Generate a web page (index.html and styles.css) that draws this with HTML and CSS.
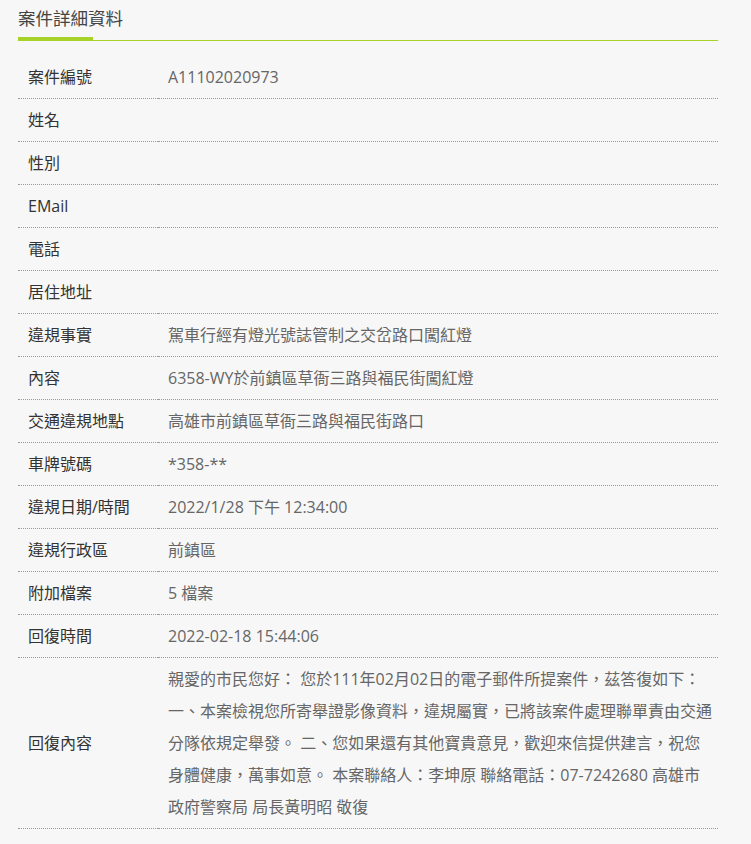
FILE: index.html
```html
<!DOCTYPE html>
<html lang="zh-Hant">
<head>
<meta charset="utf-8">
<title>案件詳細資料</title>
<link rel="stylesheet" href="styles.css">
</head>
<body>
<div class="page">
  <h2 class="title">案件詳細資料</h2>
  <table class="detail">
    <tr><th>案件編號</th><td>A11102020973</td></tr>
    <tr><th>姓名</th><td></td></tr>
    <tr><th>性別</th><td></td></tr>
    <tr><th>EMail</th><td></td></tr>
    <tr><th>電話</th><td></td></tr>
    <tr><th>居住地址</th><td></td></tr>
    <tr><th>違規事實</th><td>駕車行經有燈光號誌管制之交岔路口闖紅燈</td></tr>
    <tr><th>內容</th><td>6358-WY於前鎮區草衙三路與福民街闖紅燈</td></tr>
    <tr><th>交通違規地點</th><td>高雄市前鎮區草衙三路與福民街路口</td></tr>
    <tr><th>車牌號碼</th><td>*358-**</td></tr>
    <tr><th>違規日期/時間</th><td>2022/1/28 下午 12:34:00</td></tr>
    <tr><th>違規行政區</th><td>前鎮區</td></tr>
    <tr><th>附加檔案</th><td>5 檔案</td></tr>
    <tr><th>回復時間</th><td>2022-02-18 15:44:06</td></tr>
    <tr><th>回復內容</th><td>親愛的市民您好： 您於111年02月02日的電子郵件所提案件，茲答復如下： 一、本案檢視您所寄舉證影像資料，違規屬實，已將該案件處理聯單責由交通分隊依規定舉發。 二、您如果還有其他寶貴意見，歡迎來信提供建言，祝您身體健康，萬事如意。 本案聯絡人：李坤原 聯絡電話：07-7242680 高雄市政府警察局 局長黃明昭 敬復</td></tr>
  </table>
</div>
</body>
</html>
```
FILE: styles.css
```css
html, body {
  margin: 0;
  padding: 0;
  background: #f7f7f7;
}
body {
  font-family: "Open Sans", "Noto Sans CJK TC", sans-serif;
  color: #333;
}
.page {
  width: 700px;
  margin-left: 18px;
  padding-top: 5px;
}
.title {
  margin: 0;
  font-size: 17.5px;
  font-weight: normal;
  color: #444;
  line-height: 26px;
  height: 35px;
  border-bottom: 1px solid #a6d22a;
  position: relative;
}
.title::after {
  content: "";
  position: absolute;
  left: 0;
  bottom: -1px;
  width: 75px;
  height: 4px;
  background: #a6d22a;
}
.detail {
  width: 700px;
  border-collapse: collapse;
  margin-top: 15px;
  font-size: 16px;
}
.detail th,
.detail td {
  border-bottom: 1px dotted #9a9a9a;
  line-height: 32px;
  padding: 5px 10px;
  vertical-align: middle;
  text-align: left;
}
.detail th {
  width: 120px;
  font-weight: normal;
  color: #333;
}
.detail td {
  color: #666;
  padding-right: 5px;
  height: 32px;
}
```
